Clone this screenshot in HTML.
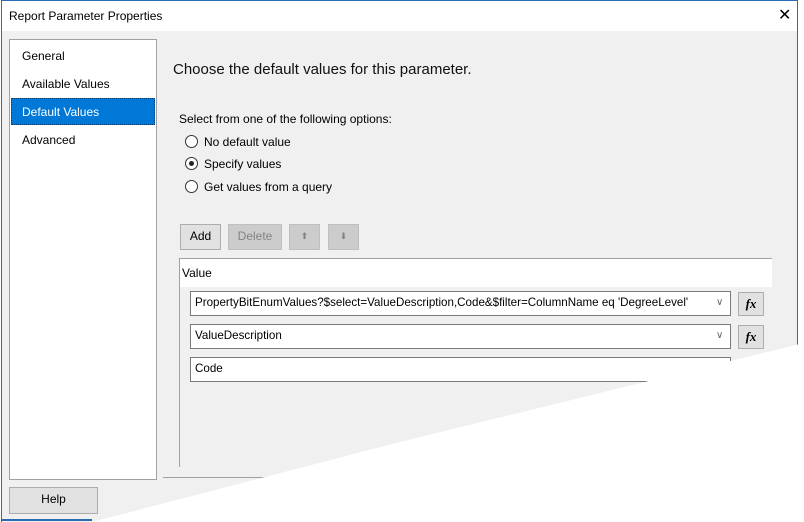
<!DOCTYPE html>
<html><head><style>
*{margin:0;padding:0;box-sizing:border-box}
body{width:804px;height:522px;overflow:hidden;background:#fff;font-family:"Liberation Sans",sans-serif;font-size:12px;color:#000;position:relative}
.a{position:absolute}
.win{left:1px;top:0;width:797px;height:522px;border:1px solid #2b6cb0;border-bottom:none;background:#f0f0f0}
.tb{left:2px;top:1px;width:795px;height:30px;background:#fff}
.nav{left:9px;top:39px;width:148px;height:441px;background:#fff;border:1px solid #a0a0a0}
.nav div{position:absolute;left:12px;font-size:12px}
.btn{background:#e1e1e1;border:1px solid #adadad;text-align:center;line-height:23px}
.dis{background:#cccccc;border:1px solid #bfbfbf;color:#838383}
.cb{background:#fff;border:1px solid #7a7a7a;padding-left:4px;line-height:22px;font-size:11.6px;white-space:nowrap;overflow:hidden}
.fx{width:26px;height:24px;background:#e1e1e1;border:1px solid #adadad;font-family:"Liberation Serif",serif;font-style:italic;font-weight:bold;text-align:center;line-height:22px;font-size:13px}
.rad{width:13px;height:13px;border:1px solid #333;border-radius:50%;background:#fff}
.chev{font-size:10px;color:#666}
</style></head><body>
<div class="a win"></div>
<div class="a tb"></div>
<div class="a" style="left:9px;top:9px;font-size:12px">Report Parameter Properties</div>
<div class="a" style="left:778px;top:5px;font-size:16px;font-weight:300">✕</div>
<div class="a nav">
<div style="top:9px">General</div>
<div style="top:37px">Available Values</div>
<div style="left:1px;top:58px;width:144px;height:27px;background:#0078d7;border:1px dotted #003c74"></div>
<div style="top:65px;color:#fff">Default Values</div>
<div style="top:93px">Advanced</div>
</div>
<div class="a" style="left:173px;top:61px;font-size:15px;color:#111">Choose the default values for this parameter.</div>
<div class="a" style="left:179px;top:112px">Select from one of the following options:</div>
<div class="a rad" style="left:185px;top:135px"></div><div class="a" style="left:204px;top:135px">No default value</div>
<div class="a rad" style="left:185px;top:157px"></div><div class="a" style="left:189px;top:161px;width:5px;height:5px;border-radius:50%;background:#222"></div><div class="a" style="left:204px;top:157px">Specify values</div>
<div class="a rad" style="left:185px;top:180px"></div><div class="a" style="left:204px;top:180px">Get values from a query</div>
<div class="a btn" style="left:180px;top:224px;width:41px;height:26px">Add</div>
<div class="a btn dis" style="left:228px;top:224px;width:54px;height:26px">Delete</div>
<div class="a btn dis" style="left:289px;top:224px;width:31px;height:26px;font-size:9px">⬆</div>
<div class="a btn dis" style="left:328px;top:224px;width:31px;height:26px;font-size:9px">⬇</div>
<div class="a" style="left:179px;top:258px;width:593px;height:209px;border-left:1px solid #a0a0a0;border-top:1px solid #a0a0a0;background:#f0f0f0"></div>
<div class="a" style="left:180px;top:259px;width:592px;height:28px;background:#fff"></div>
<div class="a" style="left:182px;top:266px">Value</div>
<div class="a cb" style="left:190px;top:291px;width:541px;height:25px">PropertyBitEnumValues?$select=ValueDescription,Code&amp;$filter=ColumnName eq 'DegreeLevel'</div>
<div class="a chev" style="left:716px;top:297px">∨</div>
<div class="a fx" style="left:738px;top:292px">fx</div>
<div class="a cb" style="left:190px;top:324px;width:541px;height:25px">ValueDescription</div>
<div class="a chev" style="left:716px;top:330px">∨</div>
<div class="a fx" style="left:738px;top:325px">fx</div>
<div class="a cb" style="left:190px;top:357px;width:541px;height:25px">Code</div>
<div class="a" style="left:163px;top:477px;width:600px;height:1px;background:#a0a0a0"></div>
<div class="a btn" style="left:9px;top:487px;width:89px;height:27px">Help</div>
<div class="a" style="left:2px;top:519px;width:90px;height:2px;background:#2b6cb0"></div>
<svg class="a" style="left:0;top:0" width="804" height="522"><polygon points="92,522 400,442 804,343 804,522" fill="#fff"/></svg>
</body></html>
